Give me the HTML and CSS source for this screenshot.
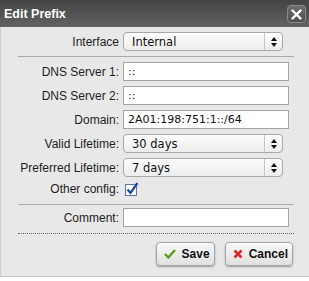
FILE: index.html
```html
<!DOCTYPE html>
<html lang="en">
<head>
  <meta charset="UTF-8">
  <title>Edit Prefix</title>
  <link rel="stylesheet" href="styles.css">
</head>
<body>

<div class="dialog">
  <div class="titlebar">
    <span class="title">Edit Prefix</span>
    <button class="close-button">
      <svg width="11" height="11" viewBox="0 0 11 11"><path d="M1.5 1.5 L9.5 9.5 M9.5 1.5 L1.5 9.5" stroke="#fff" stroke-width="2.4" stroke-linecap="round"/></svg>
    </button>
  </div>

  <div class="dialog-body">
    <div class="form-grid">
      <label class="field-label">Interface</label>
      <div class="select-box"><span>Internal</span><span class="select-arrows"><svg width="6" height="10" viewBox="0 0 6 10"><path d="M3 0 L6 4 L0 4 Z M3 10 L6 6 L0 6 Z" fill="#111"/></svg></span></div>
    </div>

    <div class="divider"></div>

    <div class="form-grid">
      <label class="field-label">DNS Server 1:</label>
      <div class="text-input">::</div>

      <label class="field-label">DNS Server 2:</label>
      <div class="text-input">::</div>

      <label class="field-label">Domain:</label>
      <div class="text-input">2A01:198:751:1::/64</div>

      <label class="field-label">Valid Lifetime:</label>
      <div class="select-box"><span>30 days</span><span class="select-arrows"><svg width="6" height="10" viewBox="0 0 6 10"><path d="M3 0 L6 4 L0 4 Z M3 10 L6 6 L0 6 Z" fill="#111"/></svg></span></div>

      <label class="field-label">Preferred Lifetime:</label>
      <div class="select-box"><span>7 days</span><span class="select-arrows"><svg width="6" height="10" viewBox="0 0 6 10"><path d="M3 0 L6 4 L0 4 Z M3 10 L6 6 L0 6 Z" fill="#111"/></svg></span></div>

      <label class="field-label">Other config:</label>
      <div class="checkbox-cell">
        <svg width="15" height="14" viewBox="0 0 15 14">
          <rect x="0.5" y="2.5" width="11" height="11" fill="#fff" stroke="#5a76a8"/>
          <path d="M2.5 7.5 L5.5 11 L12.5 1" fill="none" stroke="#2447a8" stroke-width="2.2"/>
        </svg>
      </div>
    </div>

    <div class="divider divider-low"></div>

    <div class="form-grid">
      <label class="field-label">Comment:</label>
      <div class="text-input"></div>
    </div>

    <div class="dotted-divider"></div>

    <div class="button-row">
      <button class="dialog-button">
        <svg width="12" height="10" viewBox="0 0 12 10"><path d="M1 5 L4.3 8.5 L11 1" fill="none" stroke="#5c9e1c" stroke-width="2.4"/></svg>
        Save
      </button>
      <button class="dialog-button">
        <svg width="10" height="10" viewBox="0 0 10 10"><path d="M1.5 1.5 L8.5 8.5 M8.5 1.5 L1.5 8.5" stroke="#d8262a" stroke-width="2.6"/></svg>
        Cancel
      </button>
    </div>
  </div>
</div>

</body>
</html>
```

FILE: styles.css
```css
body {
    margin: 0;
    padding: 0;
    background: #fff;
    font-family: "Liberation Sans", Arial, sans-serif;
}

.dialog {
    width: 309px;
    height: 277px;
    box-sizing: border-box;
    background: #e8e8e8;
    border-left: 1px solid #cfcfcf;
    border-bottom: 1px solid #c8c8c8;
}

.titlebar {
    height: 27px;
    margin-left: -1px;
    background: linear-gradient(to bottom, #444, #626262);
    display: flex;
    align-items: center;
    justify-content: space-between;
    padding: 0 3px 0 4px;
}

.title {
    color: #fff;
    font-weight: bold;
    font-size: 12.5px;
}

.close-button {
    width: 19px;
    height: 18px;
    padding: 0;
    border: 1px solid #8a8a8a;
    border-radius: 4px;
    background: linear-gradient(to bottom, #6e6e6e, #4e4e4e);
    display: flex;
    align-items: center;
    justify-content: center;
    margin-top: 1px;
}

.dialog-body {
    padding: 5px 15px 0 16px;
}

.form-grid {
    display: grid;
    grid-template-columns: 102px 166px;
    column-gap: 4px;
    row-gap: 5px;
    align-items: center;
}

.field-label {
    text-align: right;
    font-size: 12px;
    color: #1e1e1e;
}

.text-input {
    height: 19px;
    box-sizing: border-box;
    background: #fff;
    border: 1px solid #a4a4a4;
    font-family: "DejaVu Sans", sans-serif;
    font-size: 11px;
    line-height: 17px;
    padding-left: 4px;
    color: #111;
}

.select-box {
    width: 160px;
    height: 19px;
    box-sizing: border-box;
    border: 1px solid #a8a8a8;
    border-radius: 4px;
    background: linear-gradient(to bottom, #fdfdfd, #ececec);
    display: flex;
    align-items: center;
    justify-content: space-between;
    font-family: "DejaVu Sans", sans-serif;
    font-size: 11.5px;
    color: #111;
    padding-left: 8px;
}

.select-arrows {
    height: 100%;
    width: 17px;
    border-left: 1px solid #c4c4c4;
    display: flex;
    align-items: center;
    justify-content: center;
}

.checkbox-cell {
    height: 14px;
    display: flex;
    align-items: center;
    padding-left: 2px;
}

.divider {
    height: 1px;
    background: #a9a9a9;
    margin: 5px 0 5px 1px;
}

.divider-low {
    margin: 8px 0 3px 1px;
}

.dotted-divider {
    border-top: 1px dotted #666;
    margin: 6px 0 0 1px;
}

.button-row {
    display: flex;
    justify-content: flex-end;
    gap: 10px;
    padding: 8px 1px 0 0;
}

.dialog-button {
    height: 24px;
    display: flex;
    align-items: center;
    gap: 6px;
    padding: 0 4px 0 7px;
    border: 1px solid #a6a6a6;
    border-radius: 4px;
    background: linear-gradient(to bottom, #fafafa, #e0e0e0);
    box-shadow: 0 1px 2px rgba(0, 0, 0, 0.35);
    font-family: "Liberation Sans", Arial, sans-serif;
    font-weight: bold;
    font-size: 12px;
    color: #111;
}
```
